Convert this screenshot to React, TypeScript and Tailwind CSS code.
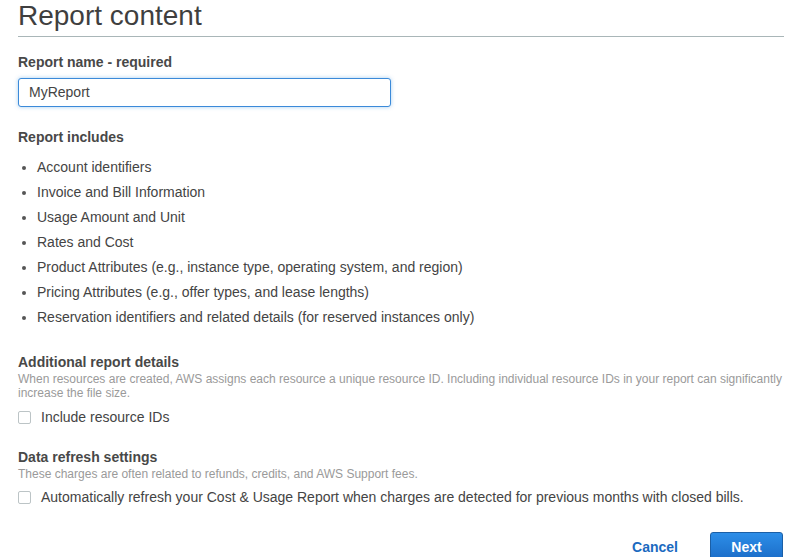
export default function App() {
  const items = [
    "Account identifiers",
    "Invoice and Bill Information",
    "Usage Amount and Unit",
    "Rates and Cost",
    "Product Attributes (e.g., instance type, operating system, and region)",
    "Pricing Attributes (e.g., offer types, and lease lengths)",
    "Reservation identifiers and related details (for reserved instances only)",
  ];

  const check = (label: string, mt: string) => (
    <label className={`${mt} flex h-5 items-center text-[14px] leading-5 text-[#444]`}>
      <span className="h-[13px] w-[13px] flex-none rounded-[2px] border border-[#bcc4c6] bg-white" />
      <span className="ml-[10px]">{label}</span>
    </label>
  );

  return (
    <div className="min-h-screen bg-white pl-[18px] pr-[11px] font-['Liberation_Sans',Arial,sans-serif] text-[#484848]">
      {/* Header */}
      <div className="border-b border-[#a9b6b8] pb-[4px]">
        <h1 className="text-[28px] leading-[32px] text-[#3f3f3f]">Report content</h1>
      </div>

      {/* Report name */}
      <div className="mt-[15px] text-[14px] font-bold leading-5">Report name - required</div>
      <div className="mt-[6px] flex h-[29px] w-[373px] items-center rounded-[3px] border border-[#3b8ad9] bg-white px-[10px] text-[14px] text-[#444] shadow-[0_0_4px_rgba(0,115,210,0.35)]">
        MyReport
      </div>

      {/* Includes */}
      <div className="mt-5 text-[14px] font-bold leading-5">Report includes</div>
      <ul className="mt-2">
        {items.map((t) => (
          <li key={t} className="flex h-[25px] items-center text-[14px] leading-[25px] text-[#444]">
            <span className="ml-[4px] h-[4px] w-[4px] flex-none rounded-full bg-[#555]" />
            <span className="ml-[11px]">{t}</span>
          </li>
        ))}
      </ul>

      {/* Additional details */}
      <div className="mt-[22px] text-[14px] font-bold leading-5">Additional report details</div>
      <p className="text-[12px] leading-[14px] text-[#9a9a9a]">
        When resources are created, AWS assigns each resource a unique resource ID. Including individual resource IDs in your report can significantly increase the file size.
      </p>
      {check("Include resource IDs", "mt-[7px]")}

      {/* Data refresh */}
      <div className="mt-5 text-[14px] font-bold leading-5">Data refresh settings</div>
      <p className="text-[12px] leading-[14px] text-[#9a9a9a]">
        These charges are often related to refunds, credits, and AWS Support fees.
      </p>
      {check(
        "Automatically refresh your Cost & Usage Report when charges are detected for previous months with closed bills.",
        "mt-[6px]"
      )}

      {/* Actions */}
      <div className="mt-[25px] flex items-center justify-end pr-px">
        <button className="mr-[32px] text-[14px] font-bold text-[#1b6ac0]">Cancel</button>
        <button className="h-[30px] w-[73px] rounded-[3px] border border-[#1b5fa6] bg-gradient-to-b from-[#2d8ee8] to-[#1a6bc6] text-[14px] font-bold text-white">
          Next
        </button>
      </div>
    </div>
  );
}
